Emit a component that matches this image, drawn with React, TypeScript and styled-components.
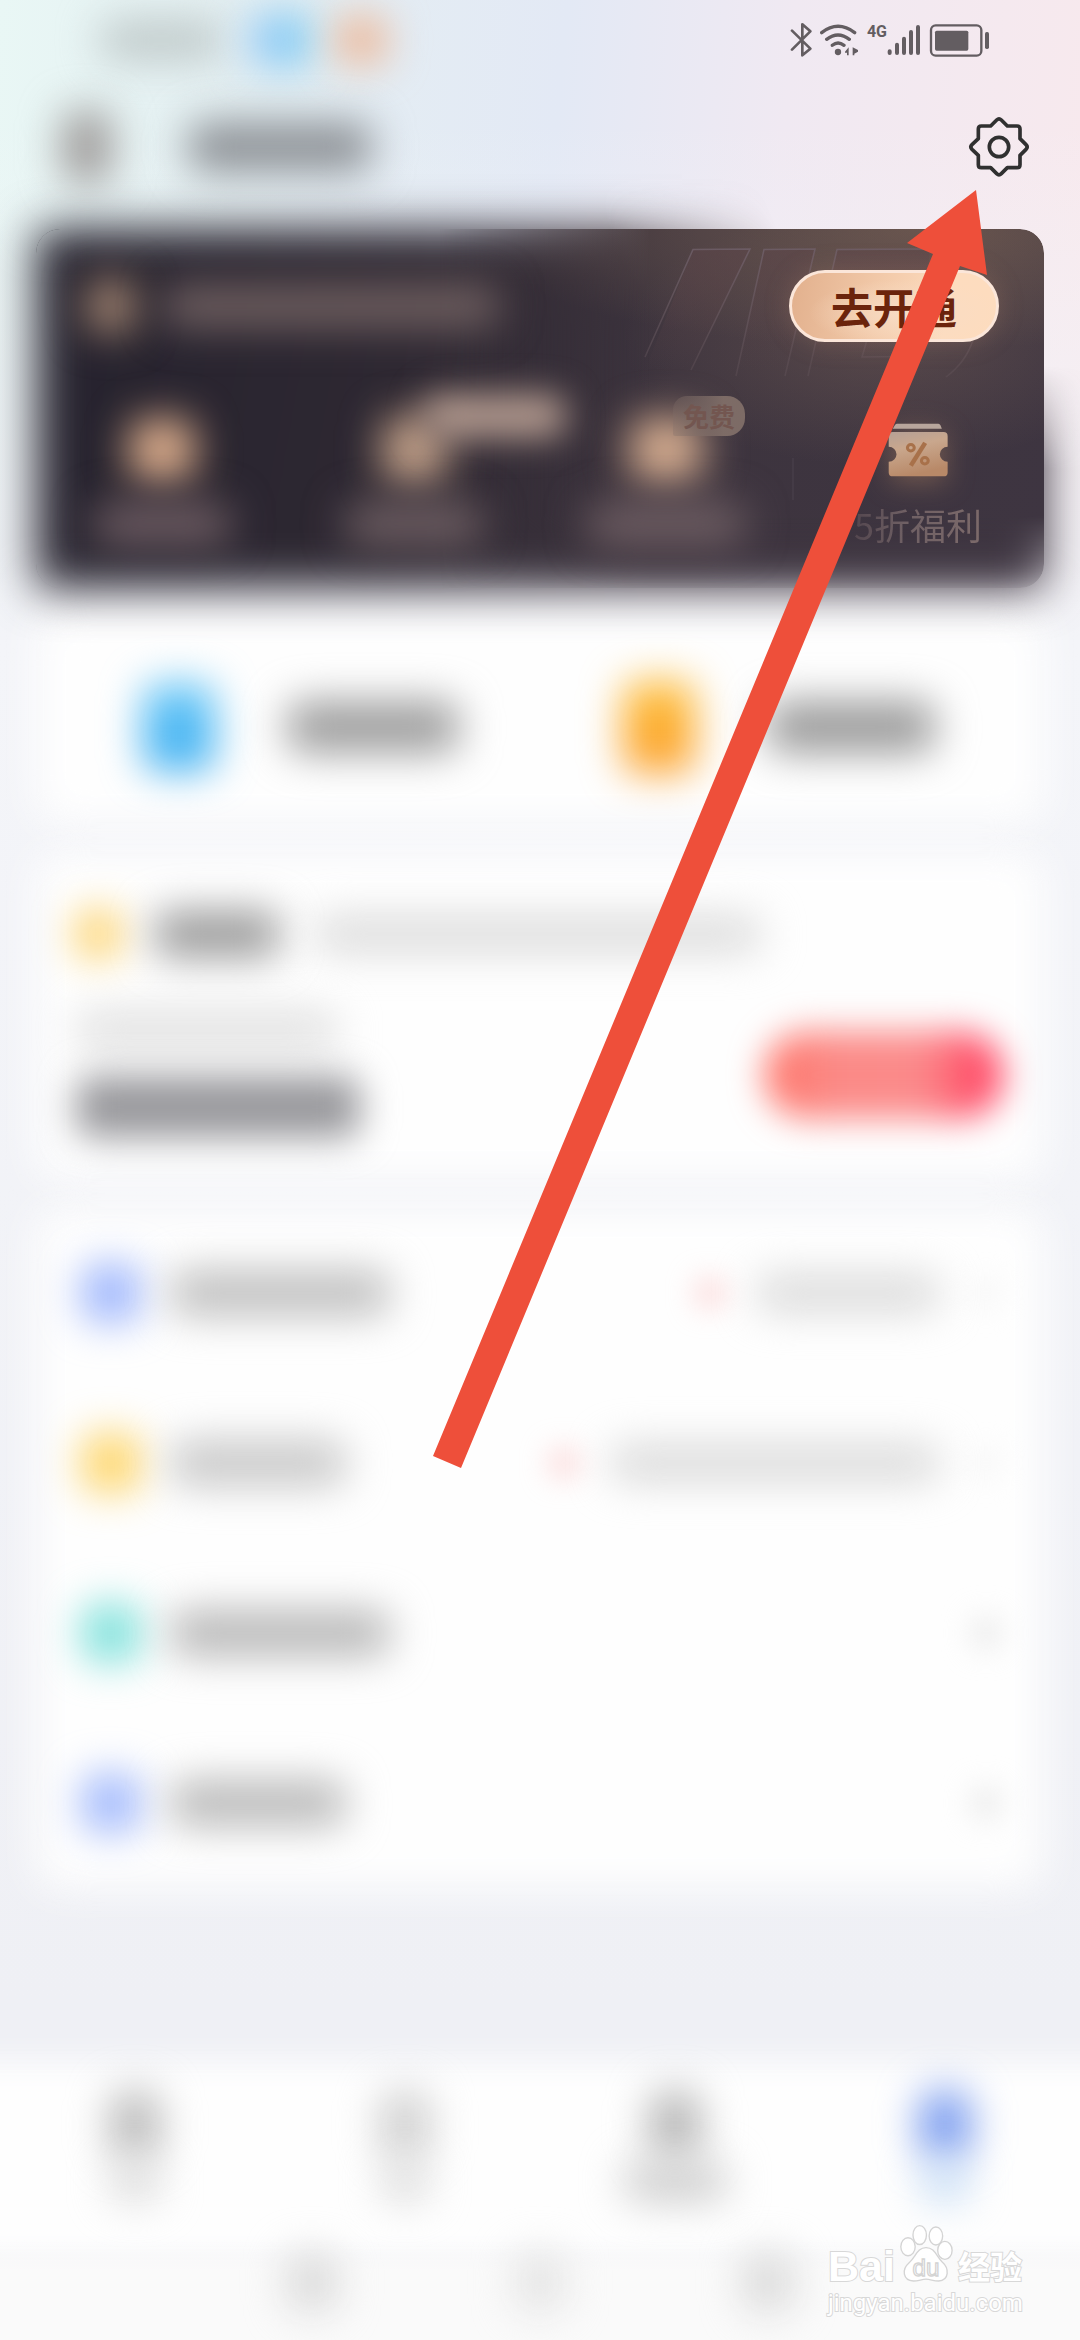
import React from "react";
import styled, { createGlobalStyle, css } from "styled-components";

const GlobalStyle = createGlobalStyle`
  *, *::before, *::after { box-sizing: border-box; }
  body {
    margin: 0;
    font-family: "Noto Sans", "Noto Sans CJK SC", sans-serif;
    background: #f1f2f6;
  }
  button { font: inherit; border: 0; padding: 0; background: none; cursor: pointer; }
`;

const Screen = styled.div`
  position: relative;
  display: flex;
  flex-direction: column;
  min-height: 100vh;
  overflow: hidden;
  background:
    linear-gradient(to bottom, rgba(243, 244, 248, 0) 120px, #f3f4f8 640px) 0 0 / 100% 640px no-repeat,
    linear-gradient(95deg, #e9f7f5 0%, #e4eff2 22%, #e3e9f5 50%, #f0e9f2 70%, #f8e9ed 100%) 0 0 / 100% 640px no-repeat,
    linear-gradient(to bottom, #f4f5f9 640px, #eff0f5 2000px);
`;

type SmudgeProps = { $w: number; $h: number; $c: string; $blur?: number };

const Smudge = styled.span<SmudgeProps>`
  display: block;
  flex: none;
  width: ${(p) => p.$w}px;
  height: ${(p) => p.$h}px;
  border-radius: 16px;
  background: ${(p) => p.$c};
  filter: blur(${(p) => p.$blur ?? 20}px);
`;

const StatusBar = styled.header`
  display: flex;
  align-items: center;
  justify-content: space-between;
  height: 80px;
  padding: 0 90px 0 100px;
`;

const StatusLeft = styled.div`
  display: flex;
  align-items: center;
  gap: 26px;
`;

const StatusRight = styled.div`
  display: flex;
  align-items: center;
  gap: 8px;
  color: #635d61;
  svg { display: block; }
`;

const Cell = styled.div`
  display: flex;
  align-items: flex-start;
`;

const Network = styled.span`
  font: 700 16px/20px Roboto, sans-serif;
`;

const TopBar = styled.div`
  display: flex;
  align-items: center;
  justify-content: space-between;
  height: 134px;
  padding: 0 50px 0 62px;
`;

const Profile = styled.div`
  display: flex;
  align-items: center;
  gap: 76px;
`;

const IconButton = styled.button`
  display: flex;
  svg { display: block; }
`;

const Main = styled.main`
  display: flex;
  flex-direction: column;
  gap: 28px;
  flex: 1;
  padding: 15px 36px 0;
`;

const MemberCard = styled.section`
  position: relative;
  isolation: isolate;
  z-index: 1;
  padding: 41px 0 42px;
  margin-bottom: -4px;
`;

const cardFill = css`
  background:
    radial-gradient(ellipse 460px 120px at 88% 0%, rgba(122, 98, 84, 0.7), rgba(122, 98, 84, 0) 100%),
    radial-gradient(ellipse 260px 130px at 84% 30%, rgba(130, 104, 92, 0.4), rgba(130, 104, 92, 0) 100%),
    linear-gradient(100deg, #25222e 0%, #2e2832 36%, #3d343e 62%, #3e3541 100%);
`;

const Halo = styled.div`
  position: absolute;
  z-index: -2;
  inset: -60px -36px -60px -36px;
  padding: 60px 36px;
  mask-image: radial-gradient(ellipse 480px 300px at 100% 0, transparent 66%, #000 100%);
  &::before {
    content: "";
    display: block;
    height: 100%;
    ${cardFill}
    filter: blur(23px);
  }
`;

const Face = styled.div`
  position: absolute;
  z-index: -1;
  inset: 0;
  border-radius: 24px;
  overflow: hidden;
  ${cardFill}
  mask-image: linear-gradient(to right, transparent 40%, #000 61%),
    linear-gradient(to bottom, #000 80%, rgba(0, 0, 0, 0.1) 100%);
  mask-composite: intersect;
  svg { position: absolute; top: 0; right: 0; }
`;

const MemberHead = styled.div`
  display: flex;
  align-items: center;
  justify-content: space-between;
  padding: 0 45px 0 50px;
`;

const MemberTitle = styled.div`
  display: flex;
  align-items: center;
  gap: 26px;
`;

const OpenButton = styled.button`
  && {
    width: 210px;
    height: 72px;
    border: 3px solid #fbe6d9;
    border-radius: 36px;
    background: radial-gradient(ellipse at 55% 60%, #f8dcc4 0%, rgba(248, 220, 196, 0) 60%),
      linear-gradient(100deg, #e2b08d 0%, #f3cbab 45%, #fddcbf 75%, #fddcbe 100%);
    color: #6b240c;
    font: 700 42px/60px "Noto Sans CJK SC", sans-serif;
    box-shadow: 0 0 26px rgba(190, 140, 110, 0.25);
  }
`;

const Features = styled.div`
  display: grid;
  grid-template-columns: repeat(4, 1fr);
  margin-top: 78px;
`;

const Feature = styled.div`
  position: relative;
  display: flex;
  flex-direction: column;
  align-items: center;
  gap: 22px;
`;

const FeatureIcon = styled.div`
  display: flex;
  align-items: center;
  justify-content: center;
  height: 60px;
  svg { display: block; filter: drop-shadow(0 6px 14px rgba(187, 138, 100, 0.45)); }
`;

const FeatureLabel = styled.div`
  display: flex;
  align-items: center;
  height: 44px;
  font: 400 36px/44px "Noto Sans CJK SC", sans-serif;
  color: transparent;
  background: linear-gradient(to right, #54474f, #6f6064 40%, #7c6a6a);
  background-clip: text;
`;

const SmudgeLabel = styled.div`
  display: flex;
  align-items: center;
  height: 44px;
`;

const FreeBadge = styled.span`
  position: absolute;
  top: -24px;
  left: calc(50% + 7px);
  padding: 0 10px;
  border-radius: 14px 18px 18px 2px;
  background: linear-gradient(to right, rgba(128, 110, 104, 0.3), rgba(128, 110, 104, 0.95) 70%);
  color: #735650;
  font: 700 26px/40px "Noto Sans CJK SC", sans-serif;
`;

const SoftBadge = styled.div`
  position: absolute;
  top: -26px;
  left: calc(50% + 10px);
`;

const ColumnRule = styled.span`
  position: absolute;
  left: 0;
  top: 38px;
  width: 2px;
  height: 42px;
  background: #443b46;
`;

const Panel = styled.section`
  position: relative;
  isolation: isolate;
  &::before {
    content: "";
    position: absolute;
    z-index: -1;
    inset: 0;
    border-radius: 24px;
    background: #fefefe;
    filter: blur(20px);
  }
`;

const QuickPanel = styled(Panel)`
  display: flex;
  align-items: center;
  justify-content: space-between;
  height: 212px;
  padding: 18px 109px 0 107px;
`;

const QuickItem = styled.div`
  display: flex;
  align-items: center;
  gap: 72px;
`;

const WalletPanel = styled(Panel)`
  padding: 52px 40px 42px;
`;

const WalletHead = styled.div`
  display: flex;
  align-items: center;
  height: 60px;
  gap: 34px;
`;

const WalletBody = styled.div`
  display: flex;
  align-items: center;
  justify-content: space-between;
  margin-top: 48px;
`;

const WalletSum = styled.div`
  display: flex;
  flex-direction: column;
  gap: 28px;
`;

const WalletAction = styled.button`
  && {
    width: 240px;
    height: 88px;
    border-radius: 44px;
    background: linear-gradient(to right, #ff7266, #fb8a86 28%, #fb8a8b 66%, #ff4a66 90%);
    filter: blur(17px);
  }
`;

const ListPanel = styled(Panel)`
  display: flex;
  flex-direction: column;
`;

const ListRow = styled.div`
  display: flex;
  align-items: center;
  height: 170px;
  padding: 0 46px;
`;

const RowLead = styled.div`
  display: flex;
  align-items: center;
  gap: 30px;
  margin-right: auto;
`;

const RowTail = styled.div`
  display: flex;
  align-items: center;
  gap: 34px;
`;

const TabBar = styled.nav`
  position: relative;
  isolation: isolate;
  display: grid;
  grid-template-columns: repeat(4, 1fr);
  height: 178px;
  padding-bottom: 10px;
  &::before {
    content: "";
    position: absolute;
    z-index: -1;
    inset: 0 -40px -20px;
    background: #fefefe;
    filter: blur(16px);
  }
`;

const Tab = styled.button`
  display: flex;
  flex-direction: column;
  align-items: center;
  justify-content: center;
  gap: 4px;
`;

const SystemNav = styled.div`
  position: relative;
  display: flex;
  align-items: center;
  justify-content: center;
  gap: 180px;
  height: 100px;
  padding-bottom: 16px;
  background: linear-gradient(to bottom, rgba(250, 250, 250, 0), #fafafa 30px);
`;

const Pointer = styled.svg`
  position: absolute;
  z-index: 2;
  top: 190px;
  right: 93px;
  pointer-events: none;
`;

const Watermark = styled.div`
  position: absolute;
  right: 58px;
  bottom: 20px;
  width: 194px;
  color: #ffffff;
`;

const outlined = css`
  -webkit-text-stroke: 2px #d8d8d8;
  paint-order: stroke fill;
`;

const Brand = styled.div`
  display: flex;
  align-items: flex-end;
  justify-content: space-between;
  svg { display: block; overflow: visible; margin: 0 -4px; }
`;

const BrandLatin = styled.span`
  font: 700 43px/40px "Liberation Sans", sans-serif;
  ${outlined}
`;

const BrandHan = styled.span`
  font: 700 32px/42px "Noto Sans CJK SC", sans-serif;
  ${outlined}
`;

const Domain = styled.div`
  font: 400 24px/34px Roboto, sans-serif;
  ${outlined}
`;

const BluetoothIcon = () => (
  <svg width="22" height="36" viewBox="90 66 66 108" fill="none" stroke="currentColor" strokeWidth="8" strokeLinecap="round" strokeLinejoin="round">
    <path d="M96 92 151 146 127 166V73L151 94 96 149" />
  </svg>
);

const WifiIcon = () => (
  <svg width="39" height="36" viewBox="186 66 117 108" fill="none" stroke="currentColor" strokeWidth="10" strokeLinecap="round">
    <path d="M191 98Q240 60 290 98M206 118Q240 92 274 118M223 136Q240 122 258 136" />
    <circle cx="240" cy="156" r="9.500" fill="currentColor" stroke="none" />
    <path d="M261 155 272 142V166H267V158H261ZM284 142 300 150V155L289 161V166H284Z" fill="currentColor" stroke="none" />
  </svg>
);

const SignalIcon = () => (
  <svg width="34" height="36" viewBox="372 66 102 108" stroke="currentColor" strokeWidth="12" strokeLinecap="round">
    <path d="M380 154V159M402 134V159M423 116V159M444 96V159M465 81V159" />
  </svg>
);

const BatteryIcon = () => (
  <svg width="61" height="36" viewBox="507 66 183 108" fill="currentColor">
    <rect x="513" y="76" width="151" height="91" rx="14" fill="none" stroke="currentColor" strokeWidth="7" />
    <rect x="525" y="92" width="100" height="60" rx="5" />
    <rect x="675" y="96" width="12" height="51" rx="5" />
  </svg>
);

const GearIcon = () => (
  <svg width="62" height="62" viewBox="624 348 186 186" fill="none" stroke="#303030" strokeWidth="11" strokeLinejoin="round">
    <path d="M710 360Q717 353 724 360L742 378H771Q780 378 780 387V416L798 434Q805 441 798 448L780 466V494Q780 503 771 503H742L724 521Q717 528 710 521L692 503H664Q655 503 655 494V466L636 448Q629 441 636 434L655 416V387Q655 378 664 378H692Z" />
    <circle cx="717" cy="441" r="29" />
  </svg>
);

const TicketIcon = () => (
  <svg width="62" height="56" viewBox="1007 634 182 172" preserveAspectRatio="none">
    <defs>
      <linearGradient id="ticket" x1="0" y1="0" x2="0.300" y2="1">
        <stop offset="0" stopColor="#b5a096" />
        <stop offset="0.400" stopColor="#c9a78d" />
        <stop offset="1" stopColor="#b88968" />
      </linearGradient>
    </defs>
    <path d="M1036 639H1158Q1162 639 1164 644L1168 655H1024L1030 644Q1032 639 1036 639Z" fill="#b8a69c" />
    <path d="M1024 665H1173Q1185 665 1185 677V710A23 23 0 0 0 1185 756V789Q1185 801 1173 801H1024Q1012 801 1012 789V756A23 23 0 0 0 1012 710V677Q1012 665 1024 665Z" fill="url(#ticket)" />
    <g fill="none" stroke="#a8714a">
      <circle cx="1077" cy="713" r="10" strokeWidth="9" />
      <circle cx="1118" cy="753" r="10" strokeWidth="9" />
      <path d="M1119 698 1077 768" strokeWidth="13" />
    </g>
  </svg>
);

const VipOutline = () => (
  <svg width="480" height="180" viewBox="564 229 480 180" fill="none">
    <defs>
      <linearGradient id="vipLine" gradientUnits="userSpaceOnUse" x1="0" y1="250" x2="0" y2="378">
        <stop offset="0" stopColor="#70606a" stopOpacity="0.800" />
        <stop offset="1" stopColor="#6a5a60" stopOpacity="0.300" />
      </linearGradient>
      <linearGradient id="vipFill" gradientUnits="userSpaceOnUse" x1="0" y1="250" x2="0" y2="370">
        <stop offset="0" stopColor="#5c4449" stopOpacity="0.500" />
        <stop offset="1" stopColor="#5c4449" stopOpacity="0" />
      </linearGradient>
    </defs>
    <path d="M693 250H750L691 370H645ZM764 250H815L785 376H736ZM837 250H930L920 356H862L808 376Z" fill="url(#vipFill)" />
    <g stroke="url(#vipLine)" strokeWidth="1.500">
      <path d="M645 357 693 249.500 750 249 691 370M736 376 764 249.500 815 249 785 376M808 376 837 249.500 930 249M867 340 862 357 905 356.500M973 340Q966 362 946 377" />
    </g>
  </svg>
);

const Paw = () => (
  <svg width="54" height="64" viewBox="892 2222 60 68" fill="#ffffff" stroke="#d4d4d4" strokeWidth="1.500">
    <ellipse cx="902" cy="2248" rx="8" ry="10" />
    <ellipse cx="915" cy="2235" rx="7.500" ry="10.500" />
    <ellipse cx="933" cy="2236" rx="7.500" ry="10" />
    <ellipse cx="943" cy="2252" rx="8" ry="10" />
    <path d="M922 2249C932 2249 933 2258 940 2265C948 2272 948 2285 936 2286C930 2286 927 2284 922 2284C917 2284 914 2286 908 2286C896 2285 895 2273 903 2266C911 2259 912 2249 922 2249Z" />
    <text x="922" y="2280" textAnchor="middle" fontFamily="Liberation Sans, sans-serif" fontSize="27" fontWeight="400">du</text>
  </svg>
);

type RowData = { icon: string; label: number; tone: string; note?: number };

const rows: RowData[] = [
  { icon: "#9ab3fc", label: 220, tone: "#bfbfbf", note: 184 },
  { icon: "#fdd466", label: 176, tone: "#c8c8c8", note: 330 },
  { icon: "#7ce0da", label: 220, tone: "#b7b7b7" },
  { icon: "#9fb7fc", label: 176, tone: "#b9b9b9" },
];

const tabs = [
  { icon: "#bababa", label: "#d9d9d9", w: 48 },
  { icon: "#cfcfcf", label: "#d8d8d8", w: 44 },
  { icon: "#b4b4b4", label: "#cdcdcd", w: 104 },
  { icon: "#7598ee", label: "#c3dbf4", w: 46 },
];

export default function App() {
  return (
    <>
      <GlobalStyle />
      <Screen>
        <StatusBar>
          <StatusLeft>
            <Smudge $w={122} $h={40} $c="#bfc9c9" />
            <Smudge $w={62} $h={54} $c="linear-gradient(to right, #aacff8, #6bc8f1)" />
            <Smudge $w={50} $h={48} $c="#edb594" />
          </StatusLeft>
          <StatusRight>
            <BluetoothIcon />
            <WifiIcon />
            <Cell>
              <Network>4G</Network>
              <SignalIcon />
            </Cell>
            <BatteryIcon />
          </StatusRight>
        </StatusBar>

        <TopBar>
          <Profile>
            <Smudge $w={50} $h={74} $c="#9f9c9b" />
            <Smudge $w={184} $h={50} $c="#8d9196" />
          </Profile>
          <IconButton type="button" aria-label="设置">
            <GearIcon />
          </IconButton>
        </TopBar>

        <Main>
          <MemberCard>
            <Halo />
            <Face>
              <VipOutline />
            </Face>
            <MemberHead>
              <MemberTitle>
                <Smudge $w={50} $h={56} $c="#a08370" />
                <Smudge $w={338} $h={44} $c="#6f5f60" />
              </MemberTitle>
              <OpenButton type="button">去开通</OpenButton>
            </MemberHead>
            <Features>
              <Feature>
                <FeatureIcon>
                  <Smudge $w={66} $h={64} $c="#dcad8c" />
                </FeatureIcon>
                <SmudgeLabel>
                  <Smudge $w={138} $h={40} $c="#715f65" />
                </SmudgeLabel>
              </Feature>
              <Feature>
                <FeatureIcon>
                  <Smudge $w={64} $h={68} $c="#c3a189" />
                </FeatureIcon>
                <SoftBadge>
                  <Smudge $w={142} $h={44} $c="#b39a8f" $blur={17} />
                </SoftBadge>
                <SmudgeLabel>
                  <Smudge $w={138} $h={40} $c="#716165" />
                </SmudgeLabel>
              </Feature>
              <Feature>
                <FeatureIcon>
                  <Smudge $w={72} $h={66} $c="#d6ad90" />
                </FeatureIcon>
                <FreeBadge>免费</FreeBadge>
                <SmudgeLabel>
                  <Smudge $w={158} $h={40} $c="#716065" />
                </SmudgeLabel>
              </Feature>
              <Feature>
                <ColumnRule />
                <FeatureIcon>
                  <TicketIcon />
                </FeatureIcon>
                <FeatureLabel>5折福利</FeatureLabel>
              </Feature>
            </Features>
          </MemberCard>

          <QuickPanel>
            <QuickItem>
              <Smudge $w={72} $h={88} $c="linear-gradient(#6ac8f7, #36abf0)" />
              <Smudge $w={172} $h={52} $c="#9d9d9d" />
            </QuickItem>
            <QuickItem>
              <Smudge $w={72} $h={92} $c="linear-gradient(#fdbf38, #fc9b25)" />
              <Smudge $w={168} $h={52} $c="#9a9a9a" />
            </QuickItem>
          </QuickPanel>

          <WalletPanel>
            <WalletHead>
              <Smudge $w={44} $h={48} $c="#fdcf60" />
              <Smudge $w={126} $h={46} $c="#989898" />
              <Smudge $w={448} $h={36} $c="#dadada" />
            </WalletHead>
            <WalletBody>
              <WalletSum>
                <Smudge $w={262} $h={36} $c="#dedede" />
                <Smudge $w={284} $h={62} $c="#98989c" $blur={18} />
              </WalletSum>
              <WalletAction type="button" />
            </WalletBody>
          </WalletPanel>

          <ListPanel>
            {rows.map((row, i) => (
              <ListRow key={i}>
                <RowLead>
                  <Smudge $w={58} $h={58} $c={row.icon} />
                  <Smudge $w={row.label} $h={46} $c={row.tone} />
                </RowLead>
                <RowTail>
                  {row.note && <Smudge $w={24} $h={26} $c="#fbc6c6" $blur={15} />}
                  {row.note && <Smudge $w={row.note} $h={36} $c="#d8d8d8" />}
                  <Smudge $w={24} $h={30} $c={row.note ? "#f5f5f5" : "#e4e4e4"} $blur={15} />
                </RowTail>
              </ListRow>
            ))}
          </ListPanel>
        </Main>

        <TabBar>
          {tabs.map((tab, i) => (
            <Tab key={i} type="button">
              <Smudge $w={50} $h={68} $c={tab.icon} />
              <Smudge $w={tab.w} $h={38} $c={tab.label} />
            </Tab>
          ))}
        </TabBar>
        <SystemNav>
          <Smudge $w={48} $h={58} $c="#d8d8d8" />
          <Smudge $w={48} $h={58} $c="#e3e3e3" />
          <Smudge $w={48} $h={58} $c="#d8d8d8" />
        </SystemNav>

        <Watermark>
          <Brand>
            <BrandLatin>Bai</BrandLatin>
            <Paw />
            <BrandHan>经验</BrandHan>
          </Brand>
          <Domain>jingyan.baidu.com</Domain>
        </Watermark>

        <Pointer width="554" height="1280" viewBox="433 190 554 1280">
          <path d="M976 190 987 275 960 266 461 1468 433 1456 933 254 907 243Z" fill="#ee4f3a" />
        </Pointer>
      </Screen>
    </>
  );
}
